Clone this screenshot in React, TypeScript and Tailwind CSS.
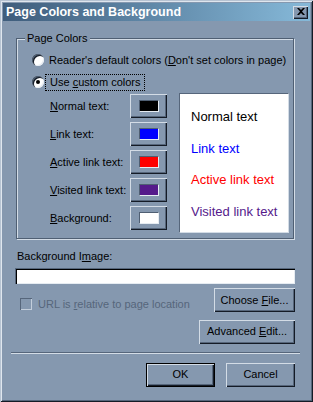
const font = { fontFamily: '"Liberation Sans", Arial, sans-serif' };

function U({ children }: { children: string }) {
  return <span className="underline underline-offset-[1px]">{children}</span>;
}

const bevel =
  "shadow-[inset_1px_1px_0_#d3dce6,inset_-1px_-1px_0_#141b26,inset_-2px_-2px_0_#56667b]";

function Button({ children, w, def }: { children: React.ReactNode; w: string; def?: boolean }) {
  return (
    <div
      className={`${w} h-[24px] flex items-center justify-center text-[11px] text-black bg-[#8598af] ${
        def ? "border border-black" : ""
      } ${bevel}`}
    >
      <span>{children}</span>
    </div>
  );
}

function ColorRow({ label, color }: { label: React.ReactNode; color: string }) {
  return (
    <div className="flex items-center h-[24px]">
      <div className="w-[80px] text-[11px] text-black">{label}</div>
      <div className={`w-[37px] h-[24px] flex items-center justify-center bg-[#8598af] ${bevel}`}>
        <div
          className="w-[20px] h-[12px] border border-t-[#4f5f73] border-l-[#4f5f73] border-r-[#e6ecf2] border-b-[#e6ecf2]"
          style={{ background: color }}
        />
      </div>
    </div>
  );
}

function Radio({ checked }: { checked?: boolean }) {
  return (
    <div className="w-[12px] h-[12px] rounded-full bg-white relative shadow-[inset_1px_1px_0_#4f5f73,inset_2px_2px_0_#141b26,inset_-1px_-1px_0_#e6ecf2]">
      {checked && <div className="absolute left-[4px] top-[4px] w-[4px] h-[4px] rounded-full bg-black" />}
    </div>
  );
}

export default function App() {
  return (
    <div
      className="w-[313px] h-[402px] bg-[#8598af] p-[3px] flex flex-col shadow-[inset_1px_1px_0_#b6c3d2,inset_-1px_-1px_0_#141b26,inset_2px_2px_0_#dfe6ee,inset_-2px_-2px_0_#56667b]"
      style={font}
    >
      {/* title bar */}
      <div className="h-[18px] flex items-center justify-between pl-[3px] pr-[2px] bg-gradient-to-r from-[#3f5d7c] to-[#86b9d9]">
        <span className="text-white font-bold text-[12.5px] leading-none">Page Colors and Background</span>
        <div className={`w-[15px] h-[13px] bg-[#8598af] flex items-center justify-center ${bevel}`}>
          <svg width="8" height="7" viewBox="0 0 8 7" className="mb-[1px]">
            <path d="M0 0h2l2 2 2-2h2L5 3.5 8 7H6L4 5 2 7H0l3-3.5z" fill="#000" />
          </svg>
        </div>
      </div>

      <div className="flex flex-col pl-[12px] pr-[15px] text-[11px] text-black">
        {/* group box */}
        <div className="relative mt-[17px] ml-[1px] w-[278px] h-[201px] border border-[#4f5f73] shadow-[1px_1px_0_#d3dce6,inset_1px_1px_0_#d3dce6] flex flex-col">
          <div className="absolute left-[8px] top-[-8px] px-[2px] bg-[#8598af] leading-[14px]">Page Colors</div>

          <div className="mt-[10px] ml-[15px] flex flex-col">
            <div className="h-[22px] flex items-center">
              <Radio />
              <span className="ml-[5px]">
                Reader's default colors (<U>D</U>on't set colors in page)
              </span>
            </div>
            <div className="h-[22px] flex items-center">
              <Radio checked />
              <div className="ml-[1px] px-[4px] h-[17px] leading-[15px] border border-dotted border-black">
                Use <U>c</U>ustom colors
              </div>
            </div>
          </div>

          <div className="flex items-start">
            <div className="ml-[33px] mt-[1px] flex flex-col gap-[4px]">
              <ColorRow label={<><U>N</U>ormal text:</>} color="#000000" />
              <ColorRow label={<><U>L</U>ink text:</>} color="#0000ff" />
              <ColorRow label={<><U>A</U>ctive link text:</>} color="#ff0000" />
              <ColorRow label={<><U>V</U>isited link text:</>} color="#551a8b" />
              <ColorRow label={<><U>B</U>ackground:</>} color="#ffffff" />
            </div>
            <div className="ml-[12px] w-[110px] h-[140px] bg-white border border-t-[#56667b] border-l-[#56667b] border-r-[#d3dce6] border-b-[#d3dce6] flex flex-col pl-[11px] pt-[14px] gap-[14.5px] text-[13px] leading-[17px]">
              <span className="text-black">Normal text</span>
              <span className="text-[#0000ff]">Link text</span>
              <span className="text-[#ff0000]">Active link text</span>
              <span className="text-[#551a8b]">Visited link text</span>
            </div>
          </div>
        </div>

        {/* background image */}
        <div className="mt-[11px] ml-[2px] leading-[13px]">
          Background I<U>m</U>age:
        </div>
        <div className="mt-[5px] h-[16px] w-[280px] bg-white shadow-[inset_1px_1px_0_#56667b,inset_2px_2px_0_#000,inset_-1px_-1px_0_#e6ecf2]" />

        <div className="mt-[4px] flex items-start justify-between">
          <div className="flex items-center mt-[8px] ml-[5px] text-[#56667b]">
            <div className="w-[12px] h-[12px] shadow-[inset_1px_1px_0_#56667b,inset_-1px_-1px_0_#c3cedb]" />
            <span className="ml-[6px]">
              URL is <U>r</U>elative to page location
            </span>
          </div>
          <Button w="w-[81px]">
            Choose <U>F</U>ile...
          </Button>
        </div>

        <div className="mt-[7px] flex justify-end">
          <Button w="w-[96px]">
            Advanced <U>E</U>dit...
          </Button>
        </div>

        <div className="mt-[8px] -ml-[4px] w-[289px] h-[2px] border-t border-[#56667b] border-b border-b-[#d3dce6]" />

        <div className="mt-[9px] flex justify-end gap-[11px]">
          <Button w="w-[69px]" def>
            OK
          </Button>
          <Button w="w-[69px]">Cancel</Button>
        </div>
      </div>
    </div>
  );
}
